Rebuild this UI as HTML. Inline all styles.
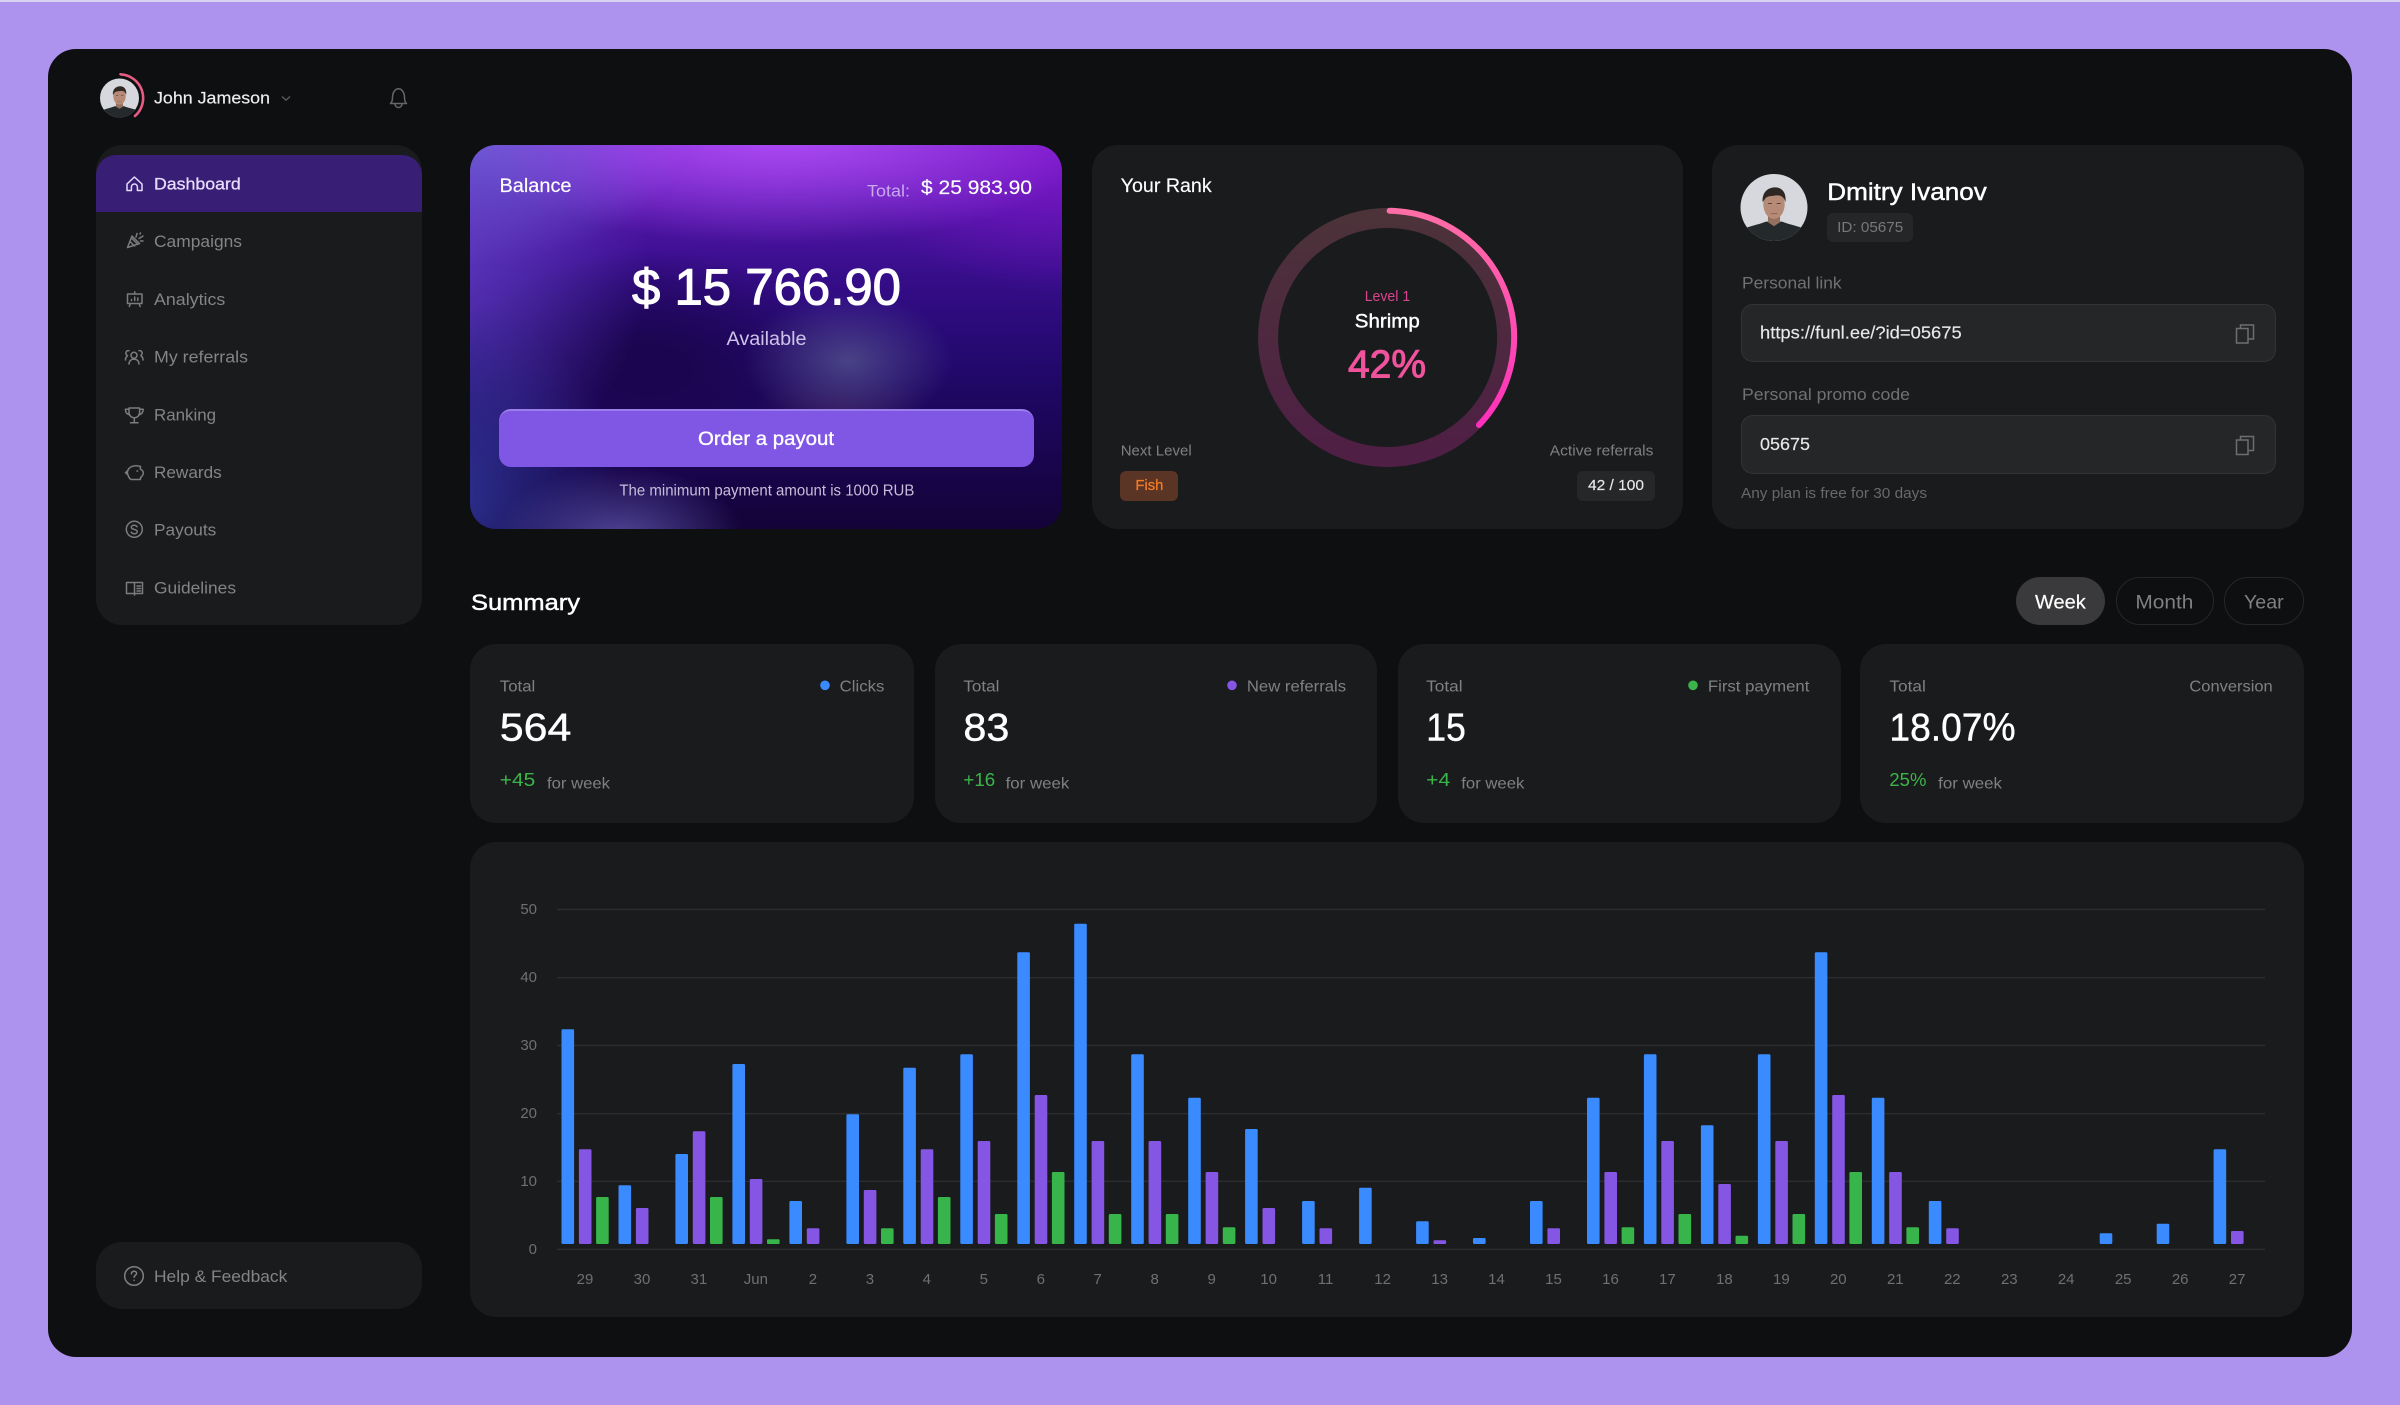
<!DOCTYPE html>
<html lang="en"><head><meta charset="utf-8"><title>Dashboard</title>
<style>
html,body{margin:0;padding:0;width:2400px;height:1405px;overflow:hidden;background:#ad92ee;font-family:"Liberation Sans",sans-serif}
.a{position:absolute;box-sizing:border-box}
.c{background:#1a1b1d;border-radius:26px}
svg{position:absolute;left:0;top:0}
text{font-family:"Liberation Sans",sans-serif}
.ic{fill:none;stroke:#7c7c7f;stroke-width:1.5;stroke-linecap:round;stroke-linejoin:round}
.ax{fill:#6f7072;font-size:15px}
.lab{fill:#7f8082}
</style></head><body>
<div class="a" style="left:0;top:0;width:2400px;height:2px;background:#d9d2ee"></div>
<div class="a" style="left:48px;top:49px;width:2304px;height:1308px;background:#0e0f11;border-radius:28px"></div>
<div class="a c" style="left:96px;top:145px;width:326px;height:480px"></div>
<div class="a" style="left:96px;top:155px;width:326px;height:57px;background:#381e75;border-radius:20px 20px 0 0"></div>
<div class="a c" style="left:96px;top:1242px;width:326px;height:67px"></div>
<div class="a" style="left:470px;top:145px;width:592px;height:384px;border-radius:26px;overflow:hidden;background:
radial-gradient(ellipse 105px 68px at 378px 216px,rgba(82,80,140,.8),rgba(82,80,140,0) 100%),
radial-gradient(ellipse 90px 40px at 370px 268px,rgba(90,40,90,.35),rgba(90,40,90,0) 100%),
radial-gradient(ellipse 125px 75px at 150px 395px,rgba(88,78,165,.9),rgba(88,78,165,0) 100%),
radial-gradient(ellipse 170px 190px at -20px 350px,rgba(46,52,150,.95),rgba(46,52,150,0) 100%),
radial-gradient(ellipse 210px 230px at -30px 110px,rgba(100,66,200,.8),rgba(100,66,200,0) 100%),
radial-gradient(ellipse 330px 115px at 310px -15px,#b24cf8 0%,rgba(178,76,248,0) 100%),
radial-gradient(ellipse 230px 130px at -10px -10px,rgba(112,118,220,.9),rgba(112,118,220,0) 100%),
radial-gradient(ellipse 230px 160px at 600px -10px,rgba(125,20,200,.9),rgba(125,20,200,0) 100%),
radial-gradient(ellipse 200px 120px at 180px 225px,#1c0550 20%,rgba(28,5,80,0) 100%),
linear-gradient(180deg,#6f22c6 0%,#4f14a4 18%,#350d88 35%,#280a76 50%,#1e0762 65%,#130338 100%)"></div>
<div class="a" style="left:499px;top:409px;width:535px;height:58px;background:#8056e4;border-top:2px solid #9a7eea;border-radius:12px"></div>
<div class="a c" style="left:1092px;top:145px;width:591px;height:384px"></div>
<div class="a" style="left:1120px;top:471px;width:58px;height:30px;background:#5a3424;border-radius:6px"></div>
<div class="a" style="left:1577px;top:471px;width:78px;height:30px;background:#262729;border-radius:6px"></div>
<div class="a c" style="left:1712px;top:145px;width:592px;height:384px"></div>
<div class="a" style="left:1827px;top:213px;width:86px;height:29px;background:#252628;border-radius:6px"></div>
<div class="a" style="left:1741px;top:304px;width:535px;height:58px;background:#252628;border:1.5px solid #323335;border-radius:12px"></div>
<div class="a" style="left:1741px;top:415px;width:535px;height:59px;background:#252628;border:1.5px solid #323335;border-radius:12px"></div>
<div class="a" style="left:2016px;top:577px;width:89px;height:48px;background:#3a3a3c;border-radius:24px"></div>
<div class="a" style="left:2116px;top:577px;width:98px;height:48px;border:1.5px solid #26272a;border-radius:24px"></div>
<div class="a" style="left:2224px;top:577px;width:80px;height:48px;border:1.5px solid #26272a;border-radius:24px"></div>
<div class="a c" style="left:470px;top:644px;width:444px;height:179px"></div>
<div class="a c" style="left:935px;top:644px;width:442px;height:179px"></div>
<div class="a c" style="left:1398px;top:644px;width:443px;height:179px"></div>
<div class="a c" style="left:1860px;top:644px;width:444px;height:179px"></div>
<div class="a c" style="left:470px;top:842px;width:1834px;height:475px"></div>

<svg width="2400" height="1405" viewBox="0 0 2400 1405" xmlns="http://www.w3.org/2000/svg">
<defs>
<linearGradient id="rg" x1="0" y1="0" x2="0" y2="1"><stop offset="0" stop-color="#4c3239"/><stop offset="1" stop-color="#4f1f45"/></linearGradient>
<linearGradient id="ag" gradientUnits="userSpaceOnUse" x1="0" y1="210" x2="0" y2="425"><stop offset="0" stop-color="#ff6ea6"/><stop offset="1" stop-color="#ff30bb"/></linearGradient>
<clipPath id="av"><circle cx="50" cy="50" r="50"/></clipPath>
<symbol id="man" viewBox="0 0 100 100">
<g clip-path="url(#av)">
<rect width="100" height="100" fill="#d6d8dd"/>
<path d="M0 100V84C10 78 26 76 38 71L62 71C74 76 90 78 100 84V100Z" fill="#24292c"/>
<path d="M41 60H59V72L50 78L41 72Z" fill="#96705f"/>
<ellipse cx="50" cy="45" rx="16" ry="22" fill="#b58a76"/>
<path d="M33 42C32 26 42 20 52 20C62 20 69 28 67 42C65 34 60 31 52 32C44 33 38 33 36 38Z" fill="#2e2723"/>
<path d="M41 44h6M54 44h6" stroke="#5a4238" stroke-width="1.6"/>
<path d="M45 59h10" stroke="#95685a" stroke-width="1.6"/>
</g>
</symbol>
</defs>

<!-- header -->
<use href="#man" x="100" y="78.5" width="39" height="39"/>
<path d="M120.5 74.3A23.8 23.8 0 0 1 135 116" fill="none" stroke="#e65c84" stroke-width="2.6" stroke-linecap="round"/>
<text x="154" y="103.3" font-size="17" fill="#eeeeee" stroke="#eeeeee" stroke-width=".15" textLength="116" lengthAdjust="spacingAndGlyphs">John Jameson</text>
<path d="M282 96.5l4 3.7l4-3.7" fill="none" stroke="#5a5a5d" stroke-width="1.4"/>
<g fill="none" stroke="#66676a" stroke-width="1.5" stroke-linejoin="round"><path d="M390.5 103.5H406.5c-1.7-1.5-2-3-2-6c0-5-2.6-8.7-6-8.7s-6 3.7-6 8.7c0 3-.3 4.5-2 6Z"/><path d="M395 104a3.5 3.5 0 0 0 7 0"/></g>

<!-- sidebar text -->
<text x="154" y="189.5" font-size="17" fill="#e6dbfb" stroke="#e6dbfb" stroke-width=".3" textLength="86.7" lengthAdjust="spacingAndGlyphs">Dashboard</text>
<g font-size="17" fill="#848486">
<text x="154" y="247.2" textLength="88" lengthAdjust="spacingAndGlyphs">Campaigns</text>
<text x="154" y="304.9" textLength="71.3" lengthAdjust="spacingAndGlyphs">Analytics</text>
<text x="154" y="362.6" textLength="94" lengthAdjust="spacingAndGlyphs">My referrals</text>
<text x="154" y="420.3" textLength="62" lengthAdjust="spacingAndGlyphs">Ranking</text>
<text x="154" y="478" textLength="67.7" lengthAdjust="spacingAndGlyphs">Rewards</text>
<text x="154" y="535.7" textLength="62.3" lengthAdjust="spacingAndGlyphs">Payouts</text>
<text x="154" y="593.4" textLength="82" lengthAdjust="spacingAndGlyphs">Guidelines</text>
<text x="154" y="1282" textLength="133.3" lengthAdjust="spacingAndGlyphs">Help &amp; Feedback</text>
</g>
<!-- sidebar icons -->
<path d="M127 184L134.4 177L142 184V190.5H137.4V187a3 3 0 0 0-6 0V190.5H127Z" fill="none" stroke="#e6dbfb" stroke-width="1.5" stroke-linejoin="round"/>
<g class="ic">
<path d="M127.5 247.5L132 236L139.5 243.5Z M130 241.5L134.5 246 M131.5 238L137.5 244"/>
<path d="M137 233.5l-1 3.5M143 236l-4 2.5M143 241h-2.5M140.5 233l-.5 1"/>
<path d="M127.5 294H142V303.5H127.5ZM134.7 291.8V294M130.5 303.5L129.3 306.5M139 303.5L140.2 306.5M131.5 300.5V299.5M134.7 300.5V297M137.8 300.5V298"/>
<circle cx="134" cy="355.3" r="3"/>
<path d="M129 364c0-6.5 10-6.5 10 0M129 350.7a2.5 2.5 0 0 0-2 4.5M125.5 360c0-2 .8-3.5 2-4.2M139 350.7a2.5 2.5 0 0 1 2 4.5M143 360c0-2-.8-3.5-2-4.2"/>
<path d="M129 408H139.6V412.5a5.3 5.3 0 0 1-10.6 0ZM129 409.3H125.4c0 3 1.6 5 4.4 5.6M139.6 409.3H143.2c0 3-1.6 5-4.4 5.6M134.3 418V422.3M130.5 422.8H138"/>
<path d="M128 475C125.8 470 130 465.7 136 465.7C137.5 465.7 139 465.9 140.5 466.5L140.3 469C142 470 143.3 471 143.3 472.8C143.3 475 142 476.5 140.5 477.5V479.5H131C129.5 478.5 128.5 476.8 128 475ZM128 470.5L125.5 472.7L128 475M137 471h.6"/>
<circle cx="134.3" cy="529.3" r="8"/>
<path d="M137 526.7c-.6-1-1.6-1.5-2.8-1.5c-1.7 0-2.9.9-2.9 2.1c0 3 6 1.4 6 4.2c0 1.3-1.3 2.2-3 2.2c-1.3 0-2.4-.5-3-1.5"/>
<path d="M126.5 582.5H134.5V593.5H126.5ZM134.5 582.5H142.5V593.5H134.5ZM134.5 593.5V595M137 586H140.5M137 588.5H140.5M137 591H140.5"/>
</g>
<g fill="none" stroke="#7f8082" stroke-width="1.5" stroke-linecap="round"><circle cx="134" cy="1276" r="9.3"/><path d="M131.5 1273.7c0-1.6 1.1-2.5 2.6-2.5c1.5 0 2.5.9 2.5 2.2c0 1.8-2.5 1.9-2.5 3.8"/><path d="M134.1 1280.2v.1"/></g>

<!-- balance -->
<text x="499.5" y="192" font-size="19" fill="#fff" stroke="#fff" stroke-width=".15" textLength="72" lengthAdjust="spacingAndGlyphs">Balance</text>
<text x="867" y="196.3" font-size="17" fill="#c9a9f0" textLength="43" lengthAdjust="spacingAndGlyphs">Total:</text>
<text x="921" y="194" font-size="19.5" fill="#fff" stroke="#fff" stroke-width=".15" textLength="111" lengthAdjust="spacingAndGlyphs">$ 25 983.90</text>
<text x="632" y="304.3" font-size="51" fill="#fff" stroke="#fff" stroke-width="1.1" textLength="269" lengthAdjust="spacingAndGlyphs">$ 15 766.90</text>
<text x="726.5" y="345" font-size="19" fill="#cfc3ea" textLength="80" lengthAdjust="spacingAndGlyphs">Available</text>
<text x="698" y="445" font-size="19" fill="#fff" stroke="#fff" stroke-width=".35" textLength="136" lengthAdjust="spacingAndGlyphs">Order a payout</text>
<text x="619.4" y="495.7" font-size="15.5" fill="#c5bdd9" textLength="295" lengthAdjust="spacingAndGlyphs">The minimum payment amount is 1000 RUB</text>

<!-- rank -->
<text x="1120.7" y="192" font-size="19" fill="#fff" stroke="#fff" stroke-width=".15" textLength="91" lengthAdjust="spacingAndGlyphs">Your Rank</text>
<circle cx="1387.6" cy="337.5" r="119.5" fill="none" stroke="url(#rg)" stroke-width="20"/>
<path d="M1389.6 210.8A126.7 126.7 0 0 1 1479 425" fill="none" stroke="url(#ag)" stroke-width="6" stroke-linecap="round"/>
<text x="1364.7" y="301" font-size="14.5" fill="#d9458e" textLength="45.5" lengthAdjust="spacingAndGlyphs">Level 1</text>
<text x="1354.8" y="327.3" font-size="19.5" fill="#fff" stroke="#fff" stroke-width=".4" textLength="65" lengthAdjust="spacingAndGlyphs">Shrimp</text>
<text x="1348" y="377.7" font-size="38.5" fill="#f1529c" stroke="#f1529c" stroke-width="1" textLength="78" lengthAdjust="spacingAndGlyphs">42%</text>
<text x="1120.7" y="455.7" font-size="15" class="lab" textLength="71" lengthAdjust="spacingAndGlyphs">Next Level</text>
<text x="1549.8" y="455.7" font-size="15" class="lab" textLength="103.6" lengthAdjust="spacingAndGlyphs">Active referrals</text>
<text x="1135.4" y="490" font-size="15" fill="#f27d26" stroke="#f27d26" stroke-width=".3" textLength="28" lengthAdjust="spacingAndGlyphs">Fish</text>
<text x="1588" y="490" font-size="15" fill="#e8e8e8" stroke="#e8e8e8" stroke-width=".15" textLength="56" lengthAdjust="spacingAndGlyphs">42 / 100</text>

<!-- profile -->
<use href="#man" x="1740.5" y="174" width="67" height="67"/>
<text x="1827.3" y="200" font-size="24.5" fill="#fff" stroke="#fff" stroke-width=".45" textLength="159.5" lengthAdjust="spacingAndGlyphs">Dmitry Ivanov</text>
<text x="1837.2" y="232" font-size="15" fill="#77787a" textLength="66" lengthAdjust="spacingAndGlyphs">ID: 05675</text>
<text x="1742" y="288.3" font-size="16.5" fill="#707173" textLength="99.6" lengthAdjust="spacingAndGlyphs">Personal link</text>
<text x="1760" y="338.3" font-size="17.5" fill="#e8e8e8" stroke="#e8e8e8" stroke-width=".15" textLength="201.7" lengthAdjust="spacingAndGlyphs">https://funl.ee/?id=05675</text>
<text x="1742" y="400" font-size="16.5" fill="#707173" textLength="168" lengthAdjust="spacingAndGlyphs">Personal promo code</text>
<text x="1760" y="450" font-size="17.5" fill="#e8e8e8" stroke="#e8e8e8" stroke-width=".15" textLength="50" lengthAdjust="spacingAndGlyphs">05675</text>
<text x="1741" y="498" font-size="14.5" fill="#68696b" textLength="186" lengthAdjust="spacingAndGlyphs">Any plan is free for 30 days</text>
<g fill="none" stroke="#6d6e70" stroke-width="1.5">
<path d="M2236.5 328.5H2248V343H2236.5ZM2240.5 328.5V325H2253.5V339H2248"/>
<path d="M2236.5 440H2248V454.5H2236.5ZM2240.5 440V436.5H2253.5V450.5H2248"/>
</g>

<!-- summary -->
<text x="471" y="610" font-size="22.5" fill="#fff" stroke="#fff" stroke-width=".45" textLength="109" lengthAdjust="spacingAndGlyphs">Summary</text>
<text x="2035" y="608.3" font-size="19.5" fill="#fff" stroke="#fff" stroke-width=".2" textLength="50.7" lengthAdjust="spacingAndGlyphs">Week</text>
<text x="2135.4" y="608.3" font-size="19.5" class="lab" textLength="58" lengthAdjust="spacingAndGlyphs">Month</text>
<text x="2244" y="608.3" font-size="19.5" class="lab" textLength="39.7" lengthAdjust="spacingAndGlyphs">Year</text>

<g font-size="15.5" class="lab">
<text x="499.8" y="691.7" textLength="35.5" lengthAdjust="spacingAndGlyphs">Total</text>
<text x="839.7" y="691.7" textLength="44.7" lengthAdjust="spacingAndGlyphs">Clicks</text>
<text x="963.4" y="691.7" textLength="36" lengthAdjust="spacingAndGlyphs">Total</text>
<text x="1246.9" y="691.7" textLength="99.2" lengthAdjust="spacingAndGlyphs">New referrals</text>
<text x="1426.2" y="691.7" textLength="36.4" lengthAdjust="spacingAndGlyphs">Total</text>
<text x="1707.9" y="691.7" textLength="101.5" lengthAdjust="spacingAndGlyphs">First payment</text>
<text x="1889.4" y="691.7" textLength="36.4" lengthAdjust="spacingAndGlyphs">Total</text>
<text x="2189.4" y="691.7" textLength="83.3" lengthAdjust="spacingAndGlyphs">Conversion</text>
</g>
<circle cx="825" cy="685.3" r="4.8" fill="#3a8bff"/>
<circle cx="1232" cy="685.3" r="4.8" fill="#8556e4"/>
<circle cx="1693" cy="685.3" r="4.8" fill="#3bb54a"/>
<g font-size="38.5" fill="#fff" stroke="#fff" stroke-width=".4">
<text x="499.8" y="740.3" textLength="71.6" lengthAdjust="spacingAndGlyphs">564</text>
<text x="963.4" y="740.3" textLength="46" lengthAdjust="spacingAndGlyphs">83</text>
<text x="1426.2" y="740.3" textLength="39.7" lengthAdjust="spacingAndGlyphs">15</text>
<text x="1889.4" y="740.3" textLength="126.2" lengthAdjust="spacingAndGlyphs">18.07%</text>
</g>
<g font-size="18" fill="#3bb54a">
<text x="499.8" y="786" textLength="35.5" lengthAdjust="spacingAndGlyphs">+45</text>
<text x="963.4" y="786" textLength="31.8" lengthAdjust="spacingAndGlyphs">+16</text>
<text x="1426.2" y="786" textLength="24" lengthAdjust="spacingAndGlyphs">+4</text>
<text x="1889.4" y="786" textLength="37" lengthAdjust="spacingAndGlyphs">25%</text>
</g>
<g font-size="16" class="lab">
<text x="547" y="788.3" textLength="63" lengthAdjust="spacingAndGlyphs">for week</text>
<text x="1005.6" y="788.3" textLength="63.7" lengthAdjust="spacingAndGlyphs">for week</text>
<text x="1461.3" y="788.3" textLength="63" lengthAdjust="spacingAndGlyphs">for week</text>
<text x="1938.2" y="788.3" textLength="63.8" lengthAdjust="spacingAndGlyphs">for week</text>
</g>

<!-- chart -->
<g fill="#2b2c2f">
<rect x="557" y="908.7" width="1708" height="1.5"/><rect x="557" y="976.9" width="1708" height="1.5"/><rect x="557" y="1044.7" width="1708" height="1.5"/><rect x="557" y="1112.9" width="1708" height="1.5"/><rect x="557" y="1180.6" width="1708" height="1.5"/><rect x="557" y="1248.6" width="1708" height="1.5"/>
</g>
<g class="ax" text-anchor="end">
<text x="537" y="914">50</text><text x="537" y="982">40</text><text x="537" y="1050">30</text><text x="537" y="1118">20</text><text x="537" y="1186">10</text><text x="537" y="1254">0</text>
</g>
<g class="ax" text-anchor="middle">
<text x="585" y="1284">29</text><text x="642" y="1284">30</text><text x="698.9" y="1284">31</text><text x="755.9" y="1284">Jun</text><text x="812.9" y="1284">2</text><text x="869.9" y="1284">3</text><text x="926.8" y="1284">4</text><text x="983.8" y="1284">5</text><text x="1040.8" y="1284">6</text><text x="1097.7" y="1284">7</text><text x="1154.7" y="1284">8</text><text x="1211.7" y="1284">9</text><text x="1268.6" y="1284">10</text><text x="1325.6" y="1284">11</text><text x="1382.6" y="1284">12</text><text x="1439.6" y="1284">13</text><text x="1496.5" y="1284">14</text><text x="1553.5" y="1284">15</text><text x="1610.5" y="1284">16</text><text x="1667.4" y="1284">17</text><text x="1724.4" y="1284">18</text><text x="1781.4" y="1284">19</text><text x="1838.3" y="1284">20</text><text x="1895.3" y="1284">21</text><text x="1952.3" y="1284">22</text><text x="2009.3" y="1284">23</text><text x="2066.2" y="1284">24</text><text x="2123.2" y="1284">25</text><text x="2180.2" y="1284">26</text><text x="2237.1" y="1284">27</text>
</g>
<!-- blue bars -->
<g fill="#3a8bff">
<rect x="561.5" y="1029.3" width="12.6" height="214.7" rx="1.2"/>
<rect x="618.5" y="1185.3" width="12.6" height="58.7" rx="1.2"/>
<rect x="675.4" y="1154" width="12.6" height="90" rx="1.2"/>
<rect x="732.4" y="1064" width="12.6" height="180" rx="1.2"/>
<rect x="789.4" y="1201" width="12.6" height="43" rx="1.2"/>
<rect x="846.4" y="1114.3" width="12.6" height="129.7" rx="1.2"/>
<rect x="903.3" y="1067.7" width="12.6" height="176.3" rx="1.2"/>
<rect x="960.3" y="1054.3" width="12.6" height="189.7" rx="1.2"/>
<rect x="1017.3" y="952.3" width="12.6" height="291.7" rx="1.2"/>
<rect x="1074.2" y="923.7" width="12.6" height="320.3" rx="1.2"/>
<rect x="1131.2" y="1054.3" width="12.6" height="189.7" rx="1.2"/>
<rect x="1188.2" y="1097.7" width="12.6" height="146.3" rx="1.2"/>
<rect x="1245.1" y="1129" width="12.6" height="115" rx="1.2"/>
<rect x="1302.1" y="1201" width="12.6" height="43" rx="1.2"/>
<rect x="1359.1" y="1187.7" width="12.6" height="56.3" rx="1.2"/>
<rect x="1416.1" y="1221.3" width="12.6" height="22.7" rx="1.2"/>
<rect x="1473" y="1238" width="12.6" height="6" rx="1.2"/>
<rect x="1530" y="1201" width="12.6" height="43" rx="1.2"/>
<rect x="1587" y="1097.7" width="12.6" height="146.3" rx="1.2"/>
<rect x="1643.9" y="1054.3" width="12.6" height="189.7" rx="1.2"/>
<rect x="1700.9" y="1125.3" width="12.6" height="118.7" rx="1.2"/>
<rect x="1757.9" y="1054.3" width="12.6" height="189.7" rx="1.2"/>
<rect x="1814.8" y="952.3" width="12.6" height="291.7" rx="1.2"/>
<rect x="1871.8" y="1097.7" width="12.6" height="146.3" rx="1.2"/>
<rect x="1928.8" y="1201" width="12.6" height="43" rx="1.2"/>
<rect x="2099.7" y="1233.3" width="12.6" height="10.7" rx="1.2"/>
<rect x="2156.7" y="1223.7" width="12.6" height="20.3" rx="1.2"/>
<rect x="2213.6" y="1149.3" width="12.6" height="94.7" rx="1.2"/>
</g>
<!-- purple bars -->
<g fill="#8556e4">
<rect x="578.9" y="1149.3" width="12.6" height="94.7" rx="1.2"/>
<rect x="635.9" y="1208" width="12.6" height="36" rx="1.2"/>
<rect x="692.8" y="1131.3" width="12.6" height="112.7" rx="1.2"/>
<rect x="749.8" y="1179" width="12.6" height="65" rx="1.2"/>
<rect x="806.8" y="1228.3" width="12.6" height="15.7" rx="1.2"/>
<rect x="863.8" y="1190" width="12.6" height="54" rx="1.2"/>
<rect x="920.7" y="1149.3" width="12.6" height="94.7" rx="1.2"/>
<rect x="977.7" y="1141" width="12.6" height="103" rx="1.2"/>
<rect x="1034.7" y="1095" width="12.6" height="149" rx="1.2"/>
<rect x="1091.6" y="1141" width="12.6" height="103" rx="1.2"/>
<rect x="1148.6" y="1141" width="12.6" height="103" rx="1.2"/>
<rect x="1205.6" y="1172" width="12.6" height="72" rx="1.2"/>
<rect x="1262.5" y="1208" width="12.6" height="36" rx="1.2"/>
<rect x="1319.5" y="1228.3" width="12.6" height="15.7" rx="1.2"/>
<rect x="1433.5" y="1240.3" width="12.6" height="3.7" rx="1"/>
<rect x="1547.4" y="1228.3" width="12.6" height="15.7" rx="1.2"/>
<rect x="1604.4" y="1172" width="12.6" height="72" rx="1.2"/>
<rect x="1661.3" y="1141" width="12.6" height="103" rx="1.2"/>
<rect x="1718.3" y="1184" width="12.6" height="60" rx="1.2"/>
<rect x="1775.3" y="1141" width="12.6" height="103" rx="1.2"/>
<rect x="1832.2" y="1095" width="12.6" height="149" rx="1.2"/>
<rect x="1889.2" y="1172" width="12.6" height="72" rx="1.2"/>
<rect x="1946.2" y="1228.3" width="12.6" height="15.7" rx="1.2"/>
<rect x="2231" y="1231" width="12.6" height="13" rx="1.2"/>
</g>
<!-- green bars -->
<g fill="#37b54a">
<rect x="596.1" y="1197" width="12.6" height="47" rx="1.2"/>
<rect x="710" y="1197" width="12.6" height="47" rx="1.2"/>
<rect x="767" y="1239.3" width="12.6" height="4.7" rx="1"/>
<rect x="881" y="1228.3" width="12.6" height="15.7" rx="1.2"/>
<rect x="937.9" y="1197" width="12.6" height="47" rx="1.2"/>
<rect x="994.9" y="1214" width="12.6" height="30" rx="1.2"/>
<rect x="1051.9" y="1172" width="12.6" height="72" rx="1.2"/>
<rect x="1108.8" y="1214" width="12.6" height="30" rx="1.2"/>
<rect x="1165.8" y="1214" width="12.6" height="30" rx="1.2"/>
<rect x="1222.8" y="1227.3" width="12.6" height="16.7" rx="1.2"/>
<rect x="1621.6" y="1227.3" width="12.6" height="16.7" rx="1.2"/>
<rect x="1678.5" y="1214" width="12.6" height="30" rx="1.2"/>
<rect x="1735.5" y="1235.7" width="12.6" height="8.3" rx="1.2"/>
<rect x="1792.5" y="1214" width="12.6" height="30" rx="1.2"/>
<rect x="1849.4" y="1172" width="12.6" height="72" rx="1.2"/>
<rect x="1906.4" y="1227.3" width="12.6" height="16.7" rx="1.2"/>
</g>
</svg>
</body></html>
